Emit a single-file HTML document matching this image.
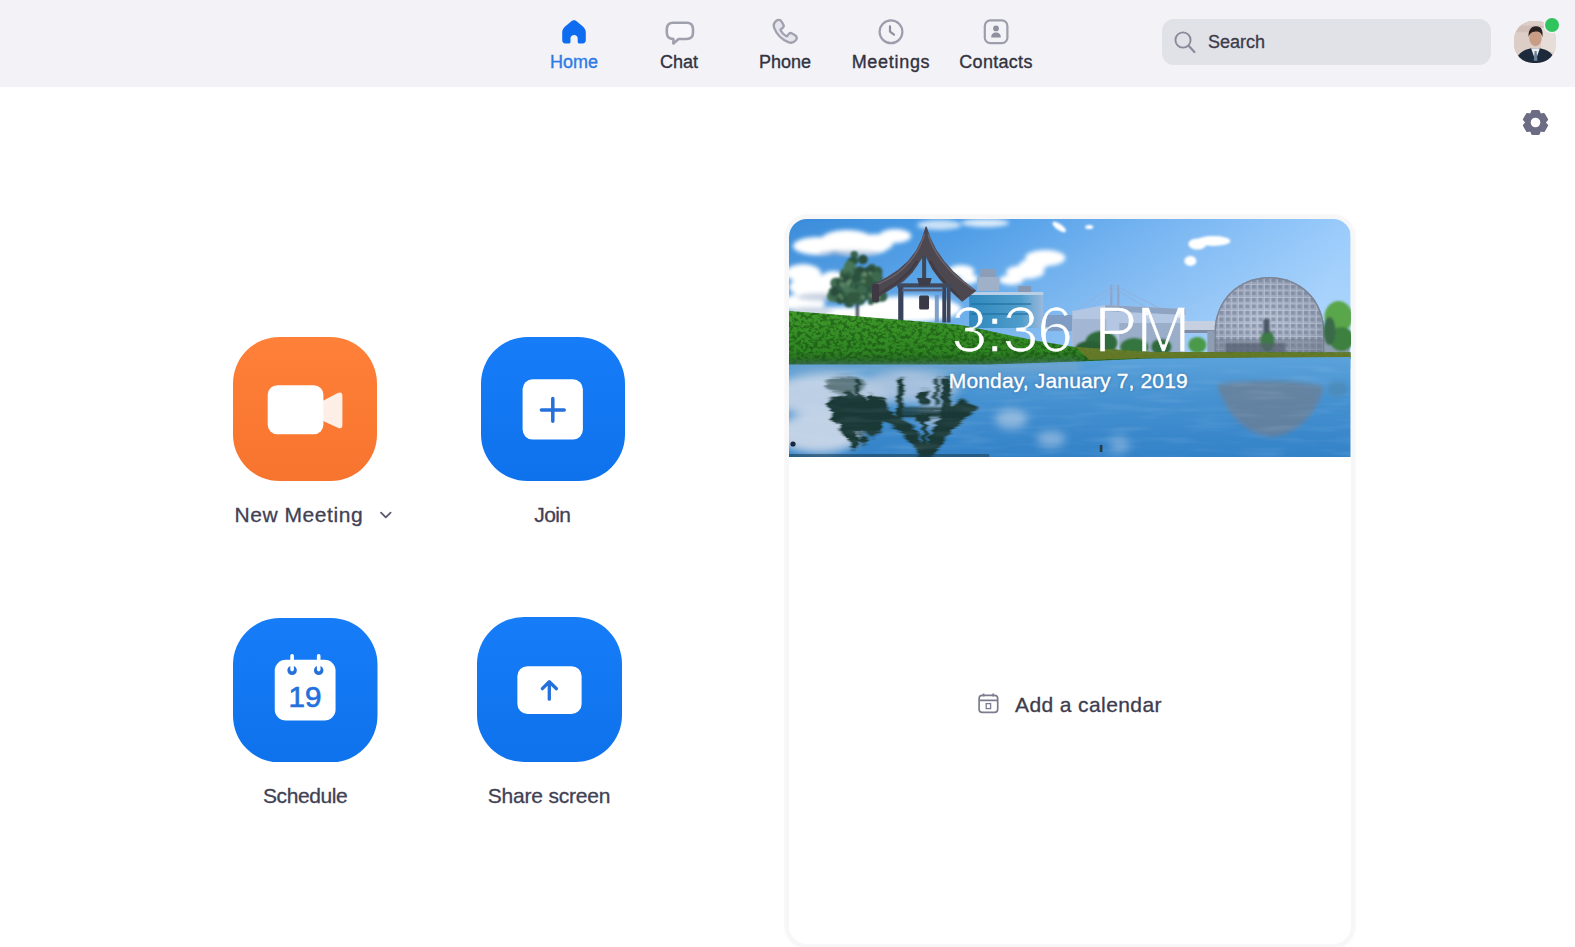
<!DOCTYPE html>
<html lang="en">
<head>
<meta charset="utf-8">
<title>Zoom</title>
<style>
*{box-sizing:border-box;margin:0;padding:0}
html,body{width:1575px;height:947px;overflow:hidden;background:#fff}
body{font-family:"Liberation Sans",sans-serif;color:#3a3a4c;position:relative}
.abs{position:absolute}
#nav{left:0;top:0;width:1575px;height:87px;background:#f2f2f7}
.tab{position:absolute;top:0;height:87px;text-align:center;font-size:18px;color:#33333f;white-space:nowrap}
.tab span{-webkit-text-stroke:.35px currentColor;position:absolute;top:52px;left:50%;transform:translateX(-50%);line-height:21px}
.tab svg{position:absolute;left:50%;transform:translateX(-50%)}
.tab.on{color:#2d7be5}
#search{left:1162px;top:19px;width:329px;height:46px;border-radius:12px;background:#e1e1e8}
#search span{-webkit-text-stroke:.3px currentColor;position:absolute;left:46px;top:12px;font-size:18px;line-height:22px;color:#3a3a4a}
.btn{position:absolute;width:144px;height:144px}
.lbl{-webkit-text-stroke:.3px currentColor;position:absolute;font-size:21px;line-height:24px;color:#414154;white-space:nowrap;transform:translateX(-50%)}
#card{left:789px;top:219px;width:561.5px;height:725px;border-radius:18px;background:#fff;box-shadow:0 0 0 4.5px #f7f7f8,0 0 3px 5px #fbfbfc}
#banner{border-radius:18px 18px 0 0;overflow:hidden}
#banner{position:absolute;left:0;top:0;width:561.5px;height:238px}
#time{position:absolute;left:.5px;width:561px;text-align:center;color:#fff}
</style>
</head>
<body>
<div id="nav" class="abs">
 <div class="tab on" style="left:524px;width:100px"><svg style="top:19px" width="26" height="26" viewBox="0 0 26 26"><path d="M13 1.300C14.300 1.300 15.400 1.900 16.500 2.900L21.600 7.300C23.800 9.200 24.800 11 24.800 13.600V21.300C24.800 23.300 23.600 24.500 21.600 24.500H18.500C17.400 24.500 16.700 23.800 16.700 22.700V19.500C16.700 17.400 15.100 16 13.100 16C11.100 16 9.500 17.400 9.500 19.500V22.700C9.500 23.800 8.800 24.500 7.700 24.500H4.400C2.400 24.500 1.200 23.300 1.200 21.300V13.600C1.200 11 2.200 9.200 4.400 7.300L9.500 2.900C10.600 1.900 11.700 1.300 13 1.300Z" fill="#0e6cf0"/></svg><span>Home</span></div>
 <div class="tab" style="left:629px;width:100px"><svg style="top:20px;margin-left:1px" width="32" height="26" viewBox="0 0 32 26"><path d="M9.300 2.700H22.500Q29 2.700 29 9.200V12.500Q29 19 22.500 19H14.600L9.400 23.400V19H9.300Q2.800 19 2.800 12.500V9.200Q2.800 2.700 9.300 2.700Z" fill="#f7f7fb" stroke="#a0a0ae" stroke-width="2.600" stroke-linejoin="round"/></svg><span>Chat</span></div>
 <div class="tab" style="left:735px;width:100px"><svg style="top:17px" width="30" height="30" viewBox="0 0 30 30"><path d="M6.700 3.500C8.200 2.400 10.200 2.700 11.200 4.200L13.100 7.200C14 8.600 13.600 10.300 12.300 11.200L11 12.100C10.500 12.400 10.400 13 10.700 13.500C11.900 15.800 13.700 17.700 16 19C16.500 19.300 17.100 19.200 17.500 18.700L18.400 17.400C19.300 16.100 21 15.700 22.400 16.600L25.400 18.500C26.900 19.500 27.200 21.500 26.100 22.900C24.200 25.400 21.100 26.300 18.200 25.100C11.700 22.400 6.700 17.400 4.300 11.100C3.200 8.300 4.200 5.300 6.700 3.500Z" fill="#e6e5ee" stroke="#a0a0ae" stroke-width="2.300" stroke-linejoin="round"/></svg><span>Phone</span></div>
 <div class="tab" style="left:841px;width:100px"><svg style="top:18px" width="28" height="28" viewBox="0 0 28 28"><circle cx="14" cy="13.8" r="11.4" fill="none" stroke="#9d9dab" stroke-width="2.2"/><path d="M13 8.4 V13.6 L17 16.6" fill="none" stroke="#8f8f9e" stroke-width="2.2" stroke-linecap="round" stroke-linejoin="round"/></svg><span style="letter-spacing:.7px">Meetings</span></div>
 <div class="tab" style="left:946px;width:100px"><svg style="top:18px" width="28" height="28" viewBox="0 0 28 28"><rect x="2.8" y="2.4" width="22.6" height="22.8" rx="5.5" fill="none" stroke="#9d9dab" stroke-width="2.2"/><circle cx="14" cy="10.4" r="2.9" fill="#8f8f9e"/><path d="M9.2 19.4 C9.2 15.8 11.2 14.4 14 14.4 C16.8 14.4 18.8 15.8 18.8 19.4 Z" fill="#8f8f9e"/></svg><span style="letter-spacing:.3px">Contacts</span></div>
</div>
<div id="search" class="abs"><span>Search</span></div>
<div id="card" class="abs"><div id="banner"><!--BANNER-START--><svg id="bsvg" width="561.5" height="238" viewBox="0 0 561 238" preserveAspectRatio="none" style="position:absolute;left:0;top:0;filter:blur(.55px)">
<defs>
<linearGradient id="sky" x1="0" y1="0" x2="1" y2="0.12">
 <stop offset="0" stop-color="#3a8cda"/><stop offset="0.3" stop-color="#4a9be6"/><stop offset="0.62" stop-color="#72b2f0"/><stop offset="1" stop-color="#9bccfc"/>
</linearGradient>
<linearGradient id="haze" x1="0" y1="0" x2="0" y2="1">
 <stop offset="0" stop-color="#fff" stop-opacity="0"/><stop offset="1" stop-color="#fff" stop-opacity="0.22"/>
</linearGradient>
<linearGradient id="water" x1="0" y1="0" x2="0" y2="1">
 <stop offset="0" stop-color="#5ba2da"/><stop offset="0.45" stop-color="#4490d0"/><stop offset="1" stop-color="#3382c8"/>
</linearGradient>
<linearGradient id="teal" x1="0" y1="0" x2="1" y2="0">
 <stop offset="0" stop-color="#2f88bd"/><stop offset="0.7" stop-color="#4f9dcb"/><stop offset="1" stop-color="#9bb9dd"/>
</linearGradient>
<linearGradient id="grassg" x1="0" y1="0" x2="0" y2="1">
 <stop offset="0" stop-color="#3f9a2a"/><stop offset="0.75" stop-color="#2f8522"/><stop offset="1" stop-color="#1f5a1c"/>
</linearGradient>
<radialGradient id="domeg" cx="0.45" cy="0.55" r="0.65">
 <stop offset="0" stop-color="#b4bdd0"/><stop offset="0.7" stop-color="#98a3b8"/><stop offset="1" stop-color="#7c8799"/>
</radialGradient>
<pattern id="grid" width="6.5" height="6.5" patternUnits="userSpaceOnUse"><rect width="6.5" height="6.5" fill="none"/><rect x="1" y="1" width="4" height="3.6" fill="#6f7c94" opacity=".55"/><path d="M0 0H6.5M0 0V6.5" stroke="#d5dbe8" stroke-width=".9" opacity=".7"/></pattern>
<filter id="b1" x="-20%" y="-20%" width="140%" height="140%"><feGaussianBlur stdDeviation="1"/></filter>
<filter id="b2" x="-20%" y="-20%" width="140%" height="140%"><feGaussianBlur stdDeviation="2.2"/></filter>
<filter id="b3" x="-30%" y="-30%" width="160%" height="160%"><feGaussianBlur stdDeviation="4"/></filter>
<filter id="b07"><feGaussianBlur stdDeviation="0.8"/></filter><filter id="refl" color-interpolation-filters="sRGB" x="-20%" y="-20%" width="140%" height="140%"><feGaussianBlur stdDeviation="1.4 1.8" result="bl"/><feTurbulence type="fractalNoise" baseFrequency="0.012 0.22" numOctaves="2" seed="4" result="n"/><feDisplacementMap in="bl" in2="n" scale="10" xChannelSelector="R" yChannelSelector="G"/><feColorMatrix values="0 0 0 0 0.10  0 0 0 0 0.22  0 0 0 0 0.21  0 0 0 1.15 0"/></filter><filter id="thin" x="-5%" y="-5%" width="110%" height="110%"><feMorphology operator="erode" radius="0.7"/></filter><filter id="b05"><feGaussianBlur stdDeviation="0.6"/></filter>
<filter id="gtex" color-interpolation-filters="sRGB" x="0" y="0" width="100%" height="100%"><feTurbulence type="fractalNoise" baseFrequency="0.24 0.3" numOctaves="3" seed="7"/><feColorMatrix values="0 0 0 0 0.07  0 0 0 0 0.26  0 0 0 0 0.06  5 0 0 0 -2.2"/><feComposite in2="SourceGraphic" operator="in"/></filter>
<filter id="wtex" color-interpolation-filters="sRGB" x="0" y="0" width="100%" height="100%"><feTurbulence type="fractalNoise" baseFrequency="0.02 0.16" numOctaves="2" seed="3"/><feColorMatrix values="0 0 0 0 0.85  0 0 0 0 0.92  0 0 0 0 1  0 0 0 -1.6 0.85"/><feComposite in2="SourceGraphic" operator="in"/></filter>
<clipPath id="domeclip"><path d="M425 134 V114 C425 80 450 58 480 58 C510 58 535 80 535 114 V134 Z"/></clipPath>
</defs>
<rect width="561" height="150" fill="url(#sky)"/>
<rect width="561" height="140" fill="url(#haze)"/>
<!-- clouds -->
<g fill="#fff" filter="url(#b2)">
 <ellipse cx="28" cy="27" rx="24" ry="9"/><ellipse cx="58" cy="21" rx="26" ry="10"/><ellipse cx="86" cy="24" rx="18" ry="9"/><ellipse cx="106" cy="17" rx="16" ry="7"/><ellipse cx="70" cy="30" rx="28" ry="6"/>
 <ellipse cx="14" cy="54" rx="18" ry="9"/><ellipse cx="30" cy="68" rx="30" ry="12"/><ellipse cx="14" cy="84" rx="22" ry="9"/><ellipse cx="44" cy="60" rx="12" ry="8"/>
 <ellipse cx="120" cy="90" rx="52" ry="13"/><ellipse cx="60" cy="96" rx="60" ry="8"/>
 <ellipse cx="172" cy="52" rx="13" ry="6"/><ellipse cx="180" cy="60" rx="9" ry="5"/>
 <ellipse cx="256" cy="39" rx="20" ry="8"/><ellipse cx="236" cy="53" rx="19" ry="7"/><ellipse cx="222" cy="61" rx="12" ry="5"/><ellipse cx="244" cy="46" rx="14" ry="6"/>
 <ellipse cx="196" cy="4" rx="24" ry="4" opacity=".8"/><ellipse cx="150" cy="6" rx="22" ry="5" opacity=".7"/>
</g>
<g fill="#fff" filter="url(#b1)">
 <ellipse cx="424" cy="22" rx="17" ry="5"/><ellipse cx="408" cy="25" rx="9" ry="5.5"/><ellipse cx="401" cy="42" rx="6" ry="5"/>
 <ellipse cx="270" cy="8" rx="8" ry="3" transform="rotate(35 270 8)"/><ellipse cx="300" cy="8" rx="4" ry="2"/>
</g>
<g fill="#8fa3c4" opacity=".45" filter="url(#b2)"><ellipse cx="34" cy="78" rx="26" ry="4"/><ellipse cx="60" cy="34" rx="30" ry="3"/><ellipse cx="22" cy="92" rx="22" ry="4"/></g>

<!-- far buildings -->
<g filter="url(#b05)">
 <!-- teal building -->
 <rect x="191" y="50" width="15" height="22" fill="#8c9db8"/><rect x="188" y="58" width="22" height="14" fill="#9fb0c9"/>
 <rect x="229" y="67" width="13" height="8" fill="#8797b2"/>
 <rect x="180" y="73" width="74" height="36" fill="url(#teal)"/>
 <rect x="180" y="73" width="74" height="3" fill="#b9cfe6"/>
 <rect x="182" y="84" width="60" height="2" fill="#1f6e9f" opacity=".6"/><rect x="182" y="94" width="60" height="2" fill="#1f6e9f" opacity=".6"/>
 <rect x="254" y="96" width="32" height="16" fill="#7f9dc4"/>
 <!-- bridge towers & cables -->
 <path d="M322 66V88M329 66V88" stroke="#8ea4c6" stroke-width="2.2"/>
 <path d="M325 66L286 92M325 66L372 90M325 70L300 90M325 70L356 88" stroke="#8fb0da" stroke-width=".9" fill="none"/>
 <!-- white building -->
 <path d="M283 92 L316 86 L396 90 V138 H283 Z" fill="#b3c6e2"/>
 <path d="M316 86 L396 90 V96 L316 92 Z" fill="#8fa3c2"/>
 <rect x="283" y="100" width="34" height="36" fill="#a3b6d4"/>
 <rect x="330" y="104" width="62" height="30" fill="#9aadc9"/>
 <!-- walkway -->
 <rect x="392" y="102" width="36" height="9" fill="#c6d0e0"/><rect x="392" y="111" width="36" height="3" fill="#7d8ba3"/>
 <!-- far right low buildings -->
 <rect x="418" y="112" width="142" height="24" fill="#8f9db2"/>
</g>
<!-- dome -->
<g clip-path="url(#domeclip)"><rect x="420" y="55" width="120" height="82" fill="url(#domeg)"/><rect x="420" y="55" width="120" height="82" fill="url(#grid)"/>
 <path d="M425 134 V114 C425 80 450 58 480 58 C510 58 535 80 535 114 V134" fill="none" stroke="#7a8496" stroke-width="3"/>
 <rect x="420" y="120" width="120" height="16" fill="#6f7a8c" opacity=".45"/>
</g>
<!-- mid trees in front of buildings -->
<g filter="url(#b1)">
 <ellipse cx="312" cy="124" rx="16" ry="12" fill="#2f6a3a"/><ellipse cx="345" cy="128" rx="14" ry="9" fill="#357540"/><ellipse cx="300" cy="130" rx="14" ry="8" fill="#2a5f35"/>
 <ellipse cx="372" cy="128" rx="10" ry="8" fill="#2d6b3b"/><ellipse cx="408" cy="126" rx="9" ry="8" fill="#4c9a48"/>
 <ellipse cx="478" cy="122" rx="7" ry="11" fill="#3c7a44"/><rect x="474" y="100" width="6" height="14" fill="#4a5766"/>
 <ellipse cx="549" cy="98" rx="14" ry="16" fill="#5aa64c"/><ellipse cx="552" cy="120" rx="12" ry="12" fill="#3d8040"/><ellipse cx="540" cy="112" rx="6" ry="14" fill="#3a6a48"/>
 <rect x="436" y="124" width="60" height="10" fill="#55606f" opacity=".7"/>
</g>
<!-- tree -->
<g filter="url(#b07)"><g id="tree"><rect x="66.8" y="70" width="3" height="32" fill="#3c4a55"/><circle cx="73.4" cy="53.7" r="5.3" fill="#2a4d3c"/><circle cx="51.3" cy="79.3" r="4.8" fill="#2c513e"/><circle cx="85.0" cy="63.7" r="3.1" fill="#2c513e"/><circle cx="61.8" cy="43.4" r="4.2" fill="#33593f"/><circle cx="72.8" cy="52.4" r="3.0" fill="#2f5642"/><circle cx="53.5" cy="73.3" r="5.3" fill="#3d6a50"/><circle cx="61.5" cy="59.1" r="3.5" fill="#3d6a50"/><circle cx="69.5" cy="62.1" r="4.9" fill="#2a4d3c"/><circle cx="55.9" cy="58.6" r="3.5" fill="#3d6a50"/><circle cx="77.5" cy="52.9" r="4.1" fill="#2c513e"/><circle cx="60.2" cy="83.1" r="5.5" fill="#2f5642"/><circle cx="50.9" cy="80.6" r="4.3" fill="#33593f"/><circle cx="54.8" cy="69.5" r="3.4" fill="#33593f"/><circle cx="67.4" cy="81.8" r="2.8" fill="#2a4d3c"/><circle cx="65.8" cy="70.3" r="2.8" fill="#2a4d3c"/><circle cx="69.9" cy="70.1" r="4.2" fill="#35604a"/><circle cx="74.0" cy="63.6" r="4.1" fill="#35604a"/><circle cx="66.5" cy="60.7" r="5.4" fill="#3d6a50"/><circle cx="69.8" cy="55.9" r="5.5" fill="#33593f"/><circle cx="63.2" cy="65.0" r="4.2" fill="#2f5642"/><circle cx="89.1" cy="74.3" r="3.0" fill="#35604a"/><circle cx="53.8" cy="76.3" r="4.8" fill="#35604a"/><circle cx="68.2" cy="58.2" r="4.0" fill="#33593f"/><circle cx="78.0" cy="65.3" r="4.8" fill="#33593f"/><circle cx="52.5" cy="79.3" r="4.6" fill="#33593f"/><circle cx="75.8" cy="56.1" r="4.1" fill="#2f5642"/><circle cx="71.3" cy="66.4" r="3.6" fill="#33593f"/><circle cx="65.3" cy="77.6" r="4.7" fill="#3d6a50"/><circle cx="89.8" cy="54.9" r="3.2" fill="#2a4d3c"/><circle cx="55.5" cy="73.4" r="3.5" fill="#2f5642"/><circle cx="56.9" cy="70.6" r="3.0" fill="#35604a"/><circle cx="63.8" cy="82.4" r="3.2" fill="#3d6a50"/><circle cx="88.4" cy="52.5" r="4.9" fill="#33593f"/><circle cx="71.1" cy="53.8" r="4.3" fill="#3d6a50"/><circle cx="74.3" cy="77.7" r="4.8" fill="#2a4d3c"/><circle cx="57.0" cy="58.4" r="6.0" fill="#2f5642"/><circle cx="56.1" cy="59.1" r="5.7" fill="#33593f"/><circle cx="82.8" cy="48.9" r="3.9" fill="#33593f"/><circle cx="75.1" cy="55.5" r="4.1" fill="#2c513e"/><circle cx="73.9" cy="40.6" r="4.8" fill="#2a4d3c"/><circle cx="54.5" cy="58.2" r="3.1" fill="#33593f"/><circle cx="71.1" cy="63.6" r="5.1" fill="#2a4d3c"/><circle cx="55.8" cy="66.0" r="3.1" fill="#2c513e"/><circle cx="66.7" cy="51.6" r="2.9" fill="#33593f"/><circle cx="47.0" cy="64.1" r="5.7" fill="#3d6a50"/><circle cx="64.9" cy="51.6" r="4.8" fill="#467558"/><circle cx="80.2" cy="53.0" r="5.8" fill="#2a4d3c"/><circle cx="46.0" cy="79.6" r="3.4" fill="#2a4d3c"/><circle cx="52.6" cy="73.9" r="4.7" fill="#3d6a50"/><circle cx="52.7" cy="78.7" r="5.5" fill="#2c513e"/><circle cx="65.2" cy="35.7" r="3.7" fill="#35604a"/><circle cx="51.0" cy="65.6" r="3.5" fill="#2a4d3c"/><circle cx="57.6" cy="56.5" r="3.8" fill="#2c513e"/><circle cx="61.3" cy="71.9" r="3.7" fill="#467558"/><circle cx="65.2" cy="41.8" r="3.9" fill="#33593f"/><circle cx="63.2" cy="41.6" r="3.4" fill="#2c513e"/><circle cx="72.5" cy="81.0" r="3.0" fill="#33593f"/><circle cx="47.5" cy="66.6" r="4.9" fill="#2c513e"/><circle cx="92.6" cy="75.9" r="3.4" fill="#2a4d3c"/><circle cx="72.7" cy="78.7" r="4.3" fill="#33593f"/><circle cx="70.7" cy="54.1" r="3.9" fill="#33593f"/><circle cx="72.3" cy="66.6" r="5.7" fill="#2f5642"/><circle cx="79.2" cy="58.8" r="3.2" fill="#2a4d3c"/><circle cx="43.6" cy="72.6" r="4.0" fill="#467558"/><circle cx="81.5" cy="77.9" r="3.5" fill="#33593f"/><circle cx="61.0" cy="73.2" r="5.9" fill="#3d6a50"/><circle cx="86.6" cy="81.2" r="2.9" fill="#467558"/><circle cx="66.0" cy="65.4" r="4.1" fill="#3d6a50"/><circle cx="70.9" cy="59.3" r="5.6" fill="#2a4d3c"/><circle cx="71.2" cy="54.7" r="5.3" fill="#35604a"/><circle cx="71.1" cy="68.9" r="5.1" fill="#2c513e"/><circle cx="73.9" cy="59.2" r="5.8" fill="#2f5642"/><circle cx="43.4" cy="77.4" r="5.5" fill="#467558"/><circle cx="70.0" cy="58.4" r="4.6" fill="#3d6a50"/><circle cx="81.2" cy="60.1" r="4.8" fill="#3d6a50"/><circle cx="87.8" cy="58.3" r="4.6" fill="#35604a"/><circle cx="54.2" cy="61.6" r="4.7" fill="#2f5642"/><circle cx="60.4" cy="47.2" r="5.4" fill="#467558"/><circle cx="46.4" cy="64.5" r="3.0" fill="#467558"/><circle cx="55.9" cy="68.1" r="5.8" fill="#3d6a50"/><circle cx="46.2" cy="76.3" r="4.2" fill="#2c513e"/><circle cx="62.1" cy="61.4" r="4.1" fill="#2f5642"/><circle cx="81.7" cy="83.1" r="2.9" fill="#35604a"/><circle cx="81.3" cy="69.8" r="3.8" fill="#3d6a50"/><circle cx="47.1" cy="74.9" r="5.1" fill="#2f5642"/><circle cx="69.3" cy="71.4" r="5.6" fill="#2f5642"/><circle cx="55.6" cy="53.9" r="4.8" fill="#467558"/><circle cx="52.8" cy="73.2" r="3.5" fill="#35604a"/><circle cx="81.0" cy="70.3" r="5.4" fill="#35604a"/><circle cx="81.7" cy="74.2" r="3.4" fill="#2c513e"/><circle cx="51.2" cy="74.8" r="3.6" fill="#33593f"/><circle cx="57.7" cy="67.1" r="5.5" fill="#2a4d3c"/><circle cx="82.7" cy="69.1" r="5.4" fill="#2f5642"/><circle cx="44.7" cy="74.7" r="5.4" fill="#3d6a50"/><circle cx="54.9" cy="56.4" r="3.9" fill="#33593f"/><circle cx="50.8" cy="72.7" r="2.9" fill="#2c513e"/><circle cx="69.1" cy="66.1" r="3.5" fill="#2c513e"/><circle cx="90.6" cy="59.3" r="3.1" fill="#2f5642"/><circle cx="87.1" cy="57.6" r="5.2" fill="#3d6a50"/><circle cx="54.1" cy="66.2" r="4.2" fill="#467558"/><circle cx="92.8" cy="77.3" r="5.5" fill="#35604a"/><circle cx="52.0" cy="67.7" r="4.1" fill="#35604a"/><circle cx="88.1" cy="66.0" r="3.8" fill="#2f5642"/><circle cx="59.3" cy="61.2" r="4.7" fill="#3d6a50"/><circle cx="71.0" cy="80.7" r="5.2" fill="#35604a"/><circle cx="72.5" cy="70.4" r="4.5" fill="#3d6a50"/><circle cx="67.0" cy="54.5" r="5.1" fill="#2f5642"/><circle cx="86.3" cy="78.5" r="5.6" fill="#33593f"/><circle cx="69.3" cy="60.6" r="4.9" fill="#3d6a50"/><circle cx="45.8" cy="72.8" r="4.5" fill="#2a4d3c"/><circle cx="59.7" cy="54.2" r="5.2" fill="#467558"/><circle cx="71.0" cy="50.8" r="3.6" fill="#2a4d3c"/><circle cx="51.2" cy="63.6" r="4.9" fill="#2f5642"/><circle cx="57.6" cy="69.2" r="3.9" fill="#467558"/><circle cx="78.5" cy="61.7" r="6.0" fill="#33593f"/><circle cx="67.2" cy="58.9" r="4.7" fill="#2c513e"/><circle cx="59.2" cy="56.2" r="4.0" fill="#35604a"/><circle cx="57.1" cy="59.6" r="4.2" fill="#2a4d3c"/><circle cx="63.7" cy="73.2" r="3.8" fill="#467558"/><circle cx="63.7" cy="78.4" r="5.8" fill="#33593f"/><circle cx="87.0" cy="76.9" r="2.3" fill="#6b9470" opacity=".7"/><circle cx="73.9" cy="78.3" r="2.3" fill="#6b9470" opacity=".7"/><circle cx="50.9" cy="76.4" r="1.9" fill="#6b9470" opacity=".7"/><circle cx="84.1" cy="77.6" r="1.6" fill="#6b9470" opacity=".7"/><circle cx="53.2" cy="65.6" r="2.6" fill="#6b9470" opacity=".7"/><circle cx="59.1" cy="64.2" r="2.4" fill="#6b9470" opacity=".7"/><circle cx="52.8" cy="79.0" r="1.8" fill="#6b9470" opacity=".7"/><circle cx="89.6" cy="78.7" r="2.0" fill="#6b9470" opacity=".7"/><circle cx="60.6" cy="61.8" r="1.7" fill="#6b9470" opacity=".7"/><circle cx="74.5" cy="62.3" r="2.0" fill="#6b9470" opacity=".7"/><circle cx="76.2" cy="55.0" r="1.9" fill="#6b9470" opacity=".7"/><circle cx="81.5" cy="76.2" r="2.5" fill="#6b9470" opacity=".7"/><circle cx="88.9" cy="78.4" r="2.1" fill="#6b9470" opacity=".7"/><circle cx="81.2" cy="54.1" r="1.9" fill="#6b9470" opacity=".7"/><circle cx="75.1" cy="55.6" r="2.3" fill="#6b9470" opacity=".7"/><circle cx="52.3" cy="59.5" r="1.7" fill="#6b9470" opacity=".7"/></g></g>
<!-- pagoda -->
<g filter="url(#b05)" id="pag">
 <path d="M137 8 L132.900 20.700 L127.100 32.400 L119 42.800 L109.700 50.900 L99.200 57.900 L88.800 63.700 L82.400 66 L84 80 L91.100 76.500 L102.700 68.900 L114.300 61.800 L122.500 53.600 L128.300 45.300 L131.800 39.600 L133.200 38 L137.200 37 L138.700 40.500 L143.400 49.800 L150.300 59.100 L156.100 66 L161.900 71.800 L173 82 L186.200 71.800 L174.700 62.600 L164.300 53.300 L155 42.800 L146.800 31.200 L141 19.600 Z" fill="#4d4750" stroke="#4d4750" stroke-width="1.200" stroke-linejoin="round"/>
 <path d="M135.500 15 C131 30 122 44 108 54.500 C101 59.500 93 63.500 85 66.500" stroke="#736a72" stroke-width="1.400" fill="none" opacity=".8"/>
 <path d="M138.800 15 C143 30 152 43 166 56.500 C172 61.500 178 66 184 70.500" stroke="#736a72" stroke-width="1.400" fill="none" opacity=".8"/>
 <path d="M88 76 L108 63.500 L121 52 L128 42 M170 78 L158 66 L148 54 L141 42" stroke="#38343e" stroke-width="2.400" fill="none" opacity=".55"/>
 <rect x="83" y="65" width="7" height="18" rx="2" fill="#3d3943"/>
 <rect x="133" y="37" width="4" height="30" fill="#3f4655"/>
 <rect x="109.100" y="65" width="5.200" height="38" fill="#39435a"/>
 <rect x="153.200" y="65" width="3.800" height="38.500" fill="#39435a"/><rect x="157.600" y="65" width="3.800" height="38.500" fill="#3f4a60"/>
 <rect x="145.700" y="76" width="4" height="27.500" fill="#6a8fc0" opacity=".85"/>
 <rect x="108" y="64.300" width="54" height="4.200" fill="#414a5c"/>
 <rect x="113" y="69.800" width="41" height="2.600" fill="#56617a"/>
 <path d="M128 59 h14.500 l-2 7.500 h-10.500 z" fill="#3d3c48"/>
 <rect x="130" y="76.500" width="9.900" height="14" rx="1.500" fill="#383946"/>
</g>
<!-- grass -->
<path d="M0 92 L40 95 L137 103 L172 106 L248 122 L286 128 L362 133 L561 133.5 V140 L360 140 L290 143 L200 146 L0 146 Z" fill="url(#grassg)"/>
<path d="M0 92 L40 95 L137 103 L172 106 L248 122 L286 128 L362 133 L561 133.5 V140 L360 140 L290 143 L200 146 L0 146 Z" fill="#000" filter="url(#gtex)" opacity=".5"/>
<path d="M286 128 L362 133 L561 133.5 V138.5 L360 139 L300 141 Z" fill="#6f7a2a" opacity=".85"/>
<!-- water -->
<path d="M0 145.5 L200 145.5 L290 142.5 L360 139.5 L561 138 V238 H0 Z" fill="url(#water)"/>
<g filter="url(#b3)">
 <ellipse cx="40" cy="176" rx="60" ry="22" fill="#c3d3e6" opacity=".95"/><ellipse cx="30" cy="214" rx="44" ry="20" fill="#c9d6e8" opacity=".95"/><ellipse cx="120" cy="168" rx="50" ry="16" fill="#aec4de" opacity=".9"/>
 <ellipse cx="150" cy="196" rx="22" ry="14" fill="#a9c0dc" opacity=".8"/>
 <ellipse cx="222" cy="200" rx="16" ry="10" fill="#9fc0e2" opacity=".8"/><ellipse cx="262" cy="220" rx="14" ry="8" fill="#9fc0e2" opacity=".7"/>
 <ellipse cx="330" cy="226" rx="10" ry="9" fill="#8fb8e0" opacity=".6"/>
 <path d="M0 146 H200 L290 143 V152 H0 Z" fill="#7fa8c8" opacity=".7"/>
</g>
<g filter="url(#refl)"><g transform="translate(0,262) scale(1,-1)"><use href="#tree"/><use href="#pag"/></g><ellipse cx="56" cy="166" rx="20" ry="9" fill="#2c6a3a" opacity=".5"/></g>
<g filter="url(#b2)">
<!-- dome reflection -->
 <path d="M428 166 C440 160 520 160 534 168 C528 196 506 216 482 218 C458 216 436 196 428 166 Z" fill="#6c7f95" opacity=".78"/>
 <ellipse cx="548" cy="170" rx="10" ry="8" fill="#4c86ae" opacity=".6"/>
</g>
<rect x="0" y="146" width="561" height="92" fill="#fff" filter="url(#wtex)" opacity=".16"/>
<circle cx="4" cy="225" r="2.6" fill="#16283a"/><rect x="310.5" y="226" width="2.6" height="7" fill="#2a3a48"/>
<rect x="0" y="235" width="200" height="3" fill="#1c3c4c" opacity=".55"/>
</svg><!--BANNER-END--></div>
<div id="time" style="top:76px;font-size:65px;line-height:70px;letter-spacing:-1.5px;word-spacing:6px;-webkit-text-stroke:.5px #fff;filter:url(#thin)">3:36 PM</div>
<div id="date" style="-webkit-text-stroke:.35px #fff;position:absolute;left:-1.2px;width:561px;top:150px;text-align:center;color:#fff;font-size:21px;line-height:24px;letter-spacing:.16px;text-shadow:0 0 3px rgba(20,50,90,.45)">Monday, January 7, 2019</div>
<div id="addcal" style="-webkit-text-stroke:.3px currentColor;position:absolute;left:226px;top:473.6px;font-size:21px;line-height:24px;color:#3c3c4e;white-space:nowrap;letter-spacing:.4px">Add a calendar</div>
<svg style="position:absolute;left:188px;top:473px" width="24" height="24" viewBox="0 0 24 24"><rect x="2.1" y="3.4" width="18.6" height="17" rx="3.2" fill="none" stroke="#7c7c90" stroke-width="1.7"/><path d="M2.1 8.4H20.7M6.6 1.4V4.6M16.2 1.4V4.6" stroke="#7c7c90" stroke-width="1.7" fill="none"/><rect x="9.2" y="11.6" width="4.4" height="5" fill="none" stroke="#7c7c90" stroke-width="1.3"/></svg>
</div>

<svg class="abs" style="left:1170px;top:27px" width="30" height="30" viewBox="0 0 30 30"><circle cx="13" cy="13" r="7.6" fill="none" stroke="#8a8a9a" stroke-width="1.9"/><path d="M18.6 18.8L24.4 25" stroke="#8a8a9a" stroke-width="2.2" stroke-linecap="round"/></svg>
<div id="avatar" class="abs" style="left:1514px;top:21px;width:42px;height:42px;border-radius:19px;overflow:hidden;background:#d9c9c2">
<svg width="42" height="42" viewBox="0 0 42 42"><defs><filter id="ab"><feGaussianBlur stdDeviation=".7"/></filter></defs><g filter="url(#ab)"><rect width="42" height="42" fill="#dccdc6"/><g transform="translate(-1.6,-4.200) scale(1.1)"><rect x="0" y="8" width="42" height="6" fill="#c9b5ad" opacity=".6"/><rect x="26" y="10" width="16" height="22" fill="#e6dcd8"/><path d="M3 42 C4 33 10 30 17 28.5 L25 28.5 C32 30 38 33 39 42 Z" fill="#1c2b3a"/><path d="M17 28.5 L21 40 L25 28.5 Z" fill="#e9edf2"/><path d="M20.2 31 h1.8 l.8 9 h-3.4 z" fill="#6a7f98"/><ellipse cx="21" cy="19.5" rx="5.6" ry="7.2" fill="#c99c86"/><path d="M14.8 18.5 C14 11 18 8.5 21.5 8.5 C26 8.5 28.4 12 27.2 18.5 C26.5 14.5 24 13 21 13.4 C18 13.6 15.6 15 14.8 18.5 Z" fill="#2a2220"/></g></g></svg></div>
<div class="abs" style="left:1545px;top:18px;width:14px;height:14px;border-radius:50%;background:#2fc45e;box-shadow:0 0 0 1.5px #f2f2f7"></div>
<svg id="gear" class="abs" style="left:1521px;top:108px" width="29" height="29" viewBox="0 0 29 29"><path id="gearp" fill="#6c6c84" fill-rule="evenodd" stroke="#6c6c84" stroke-width="2.2" stroke-linejoin="round" d="M10.09 6.43L11.33 3.03L17.67 3.03L18.91 6.43L19.29 6.64L22.85 6.02L26.02 11.51L23.70 14.28L23.70 14.72L26.02 17.49L22.85 22.98L19.29 22.36L18.91 22.57L17.67 25.97L11.33 25.97L10.09 22.57L9.71 22.36L6.15 22.98L2.98 17.49L5.30 14.72L5.30 14.28L2.98 11.51L6.15 6.02L9.71 6.64Z M20.40 14.50 a5.9 5.9 0 1 0 -11.8 0 a5.9 5.9 0 1 0 11.8 0Z"/></svg>

<div class="btn" style="left:233px;top:337px"><svg width="144" height="144" viewBox="0 0 144 144"><defs><linearGradient id="og" x1="0" y1="0" x2="0" y2="1"><stop offset="0" stop-color="#ff8038"/><stop offset="1" stop-color="#f7742f"/></linearGradient></defs><rect x="0" y="0" width="144" height="144" rx="46.500" fill="url(#og)"/><path d="M89 64.300L104.800 56.100Q109.400 54 109.400 59V87.800Q109.400 92.800 104.800 90.700L89 83.400Z" fill="#fdeee6"/><rect x="34.700" y="48.200" width="55.700" height="49" rx="9.500" fill="#fff"/></svg></div>
<div class="btn" style="left:481px;top:337px"><svg width="144" height="144" viewBox="0 0 144 144"><defs><linearGradient id="bg1" x1="0" y1="0" x2="0" y2="1"><stop offset="0" stop-color="#177cf8"/><stop offset="1" stop-color="#0e72ec"/></linearGradient></defs><rect x="0" y="0" width="144" height="144" rx="46.500" fill="url(#bg1)"/><rect x="41.600" y="42.300" width="60.300" height="60.300" rx="10" fill="#fff"/><path d="M71.800 61.500V84.300M60.400 72.900H83.200" stroke="#2470dc" stroke-width="3.500" stroke-linecap="round"/></svg></div>
<div class="btn" style="left:233px;top:617.500px"><svg width="144.500" height="144.500" viewBox="0 0 144 144"><rect x="0" y="0" width="144" height="144" rx="46.500" fill="url(#bg1)"/><rect x="41.600" y="41.600" width="60.600" height="60.600" rx="11" fill="#fff"/><circle cx="58.900" cy="52.200" r="4.700" fill="#2470dc"/><circle cx="85.400" cy="52.200" r="4.700" fill="#2470dc"/><path d="M58.900 37.700V51.400M85.400 37.700V51.400" stroke="#fff" stroke-width="3.600" stroke-linecap="round"/><text x="71.700" y="88.600" text-anchor="middle" font-family="Liberation Sans, sans-serif" font-size="29.500" fill="#2470dc" stroke="#2470dc" stroke-width=".7">19</text></svg></div>
<div class="btn" style="left:476.700px;top:617.300px"><svg width="145" height="145" viewBox="0 0 144 144"><rect x="0" y="0" width="144" height="144" rx="46.500" fill="url(#bg1)"/><rect x="40.100" y="48.800" width="63.800" height="47.600" rx="10" fill="#fff"/><path d="M71.800 81.600V64.600M64.900 71.200L71.800 64.300L78.900 71.200" stroke="#2470dc" stroke-width="3.300" stroke-linecap="round" stroke-linejoin="round" fill="none"/></svg></div>

<div class="lbl" id="l1" style="top:502.8px;transform:none;left:234.5px;letter-spacing:.55px">New Meeting</div>
<svg class="abs" style="left:378px;top:509px" width="16" height="12" viewBox="0 0 16 12"><path d="M3 3.600L7.800 8.400L12.600 3.600" fill="none" stroke="#5a5a6c" stroke-width="1.800" stroke-linecap="round" stroke-linejoin="round"/></svg>
<div class="lbl" id="l2" style="left:552.3px;top:502.8px;letter-spacing:-.6px">Join</div>
<div class="lbl" id="l3" style="left:305.2px;top:783.8px;letter-spacing:-.4px">Schedule</div>
<div class="lbl" id="l4" style="left:549px;top:783.8px;letter-spacing:-.2px">Share screen</div>
</body>
</html>
